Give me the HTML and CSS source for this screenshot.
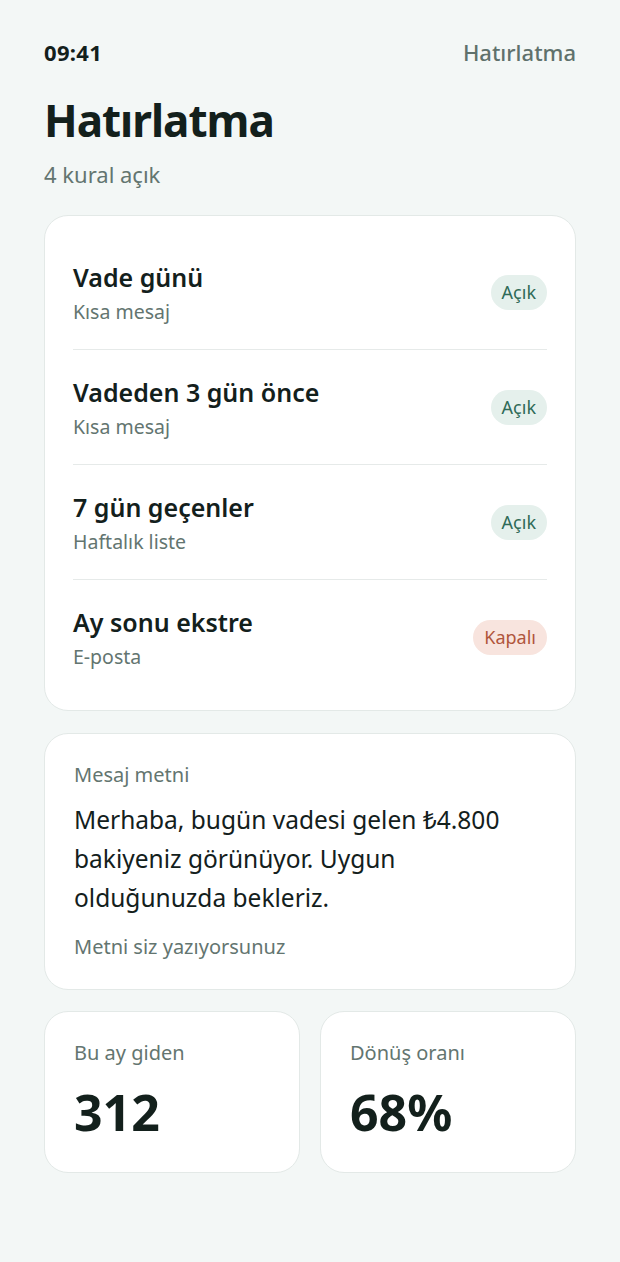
FILE: index.html
```html
<!DOCTYPE html>
<html lang="tr">
<head>
  <meta charset="utf-8">
  <link rel="stylesheet" href="styles.css">
</head>
<body>
  <div class="screen">
    <!-- status bar -->
    <div class="status-bar">
      <span class="time">09:41</span>
      <span class="status-title">Hatırlatma</span>
    </div>

    <header class="page-head">
      <h1>Hatırlatma</h1>
      <p class="subtitle">4 kural açık</p>
    </header>

    <div class="card rules">
      <div class="rule">
        <div class="rule-text">
          <div class="rule-name">Vade günü</div>
          <div class="rule-kind">Kısa mesaj</div>
        </div>
        <span class="badge on">Açık</span>
      </div>
      <div class="rule">
        <div class="rule-text">
          <div class="rule-name">Vadeden 3 gün önce</div>
          <div class="rule-kind">Kısa mesaj</div>
        </div>
        <span class="badge on">Açık</span>
      </div>
      <div class="rule">
        <div class="rule-text">
          <div class="rule-name">7 gün geçenler</div>
          <div class="rule-kind">Haftalık liste</div>
        </div>
        <span class="badge on">Açık</span>
      </div>
      <div class="rule">
        <div class="rule-text">
          <div class="rule-name">Ay sonu ekstre</div>
          <div class="rule-kind">E-posta</div>
        </div>
        <span class="badge off">Kapalı</span>
      </div>
    </div>

    <div class="card message">
      <div class="label">Mesaj metni</div>
      <p class="message-body">Merhaba, bugün vadesi gelen ₺4.800 bakiyeniz görünüyor. Uygun olduğunuzda bekleriz.</p>
      <div class="label">Metni siz yazıyorsunuz</div>
    </div>

    <div class="stats">
      <div class="card stat">
        <div class="label">Bu ay giden</div>
        <div class="stat-value">312</div>
      </div>
      <div class="card stat">
        <div class="label">Dönüş oranı</div>
        <div class="stat-value">68%</div>
      </div>
    </div>
  </div>
</body>
</html>
```

FILE: styles.css
```css
body {
  margin: 0;
  background-color: #f3f7f6;
  font-family: 'Noto Sans', 'Open Sans', sans-serif;
  color: #13201c;
}

.screen {
  padding: 34px 44px 40px;
  display: flex;
  flex-direction: column;
}

/* status bar */
.status-bar {
  display: flex;
  justify-content: space-between;
  align-items: center;
  height: 36px;
}

.time {
  font-size: 22px;
  font-weight: 700;
  letter-spacing: 0.3px;
}

.status-title {
  font-size: 22px;
  font-weight: 500;
  color: #5f716c;
}

.page-head {
  margin-top: 22px;
}

h1 {
  margin: 0;
  font-size: 44px;
  font-weight: 700;
  line-height: 56px;
  letter-spacing: -1px;
}

.subtitle {
  margin: 10px 0 0;
  font-size: 22px;
  color: #637570;
  line-height: 32px;
}

.card {
  background: white;
  border: 1px solid #e3e9e7;
  border-radius: 24px;
}

/* rules list */
.rules {
  margin-top: 25px;
  padding: 19px 28px 16px;
}

.rule {
  display: flex;
  justify-content: space-between;
  align-items: center;
  height: 114px;
  border-bottom: 1px solid #e6eae9;
}

.rule:last-child {
  border-bottom: none;
}

.rule-name {
  font-size: 25px;
  font-weight: 600;
  line-height: 36px;
}

.rule-kind {
  margin-top: 4px;
  font-size: 19.5px;
  color: #637570;
  line-height: 26px;
}

.badge {
  font-size: 18px;
  padding: 5px 11px;
  border-radius: 18px;
  line-height: 25px;
}

.badge.on {
  background: #e5f0ec;
  color: #2e6a57;
}

.badge.off {
  background: #f8e4de;
  color: #b0553b;
}

/* message */
.message {
  margin-top: 22px;
  padding: 28px 40px 29px 29px;
}

.label {
  font-size: 20px;
  color: #637570;
  line-height: 26px;
}

.message-body {
  margin: 12px 0 17px;
  font-size: 24.5px;
  line-height: 39px;
}

/* stats */
.stats {
  margin-top: 21px;
  display: grid;
  grid-template-columns: 1fr 1fr;
  gap: 20px;
}

.stat {
  padding: 28px 29px 26px;
  height: 106px;
}

.stat-value {
  margin-top: 16px;
  font-size: 50px;
  font-weight: 700;
  line-height: 60px;
}
```
